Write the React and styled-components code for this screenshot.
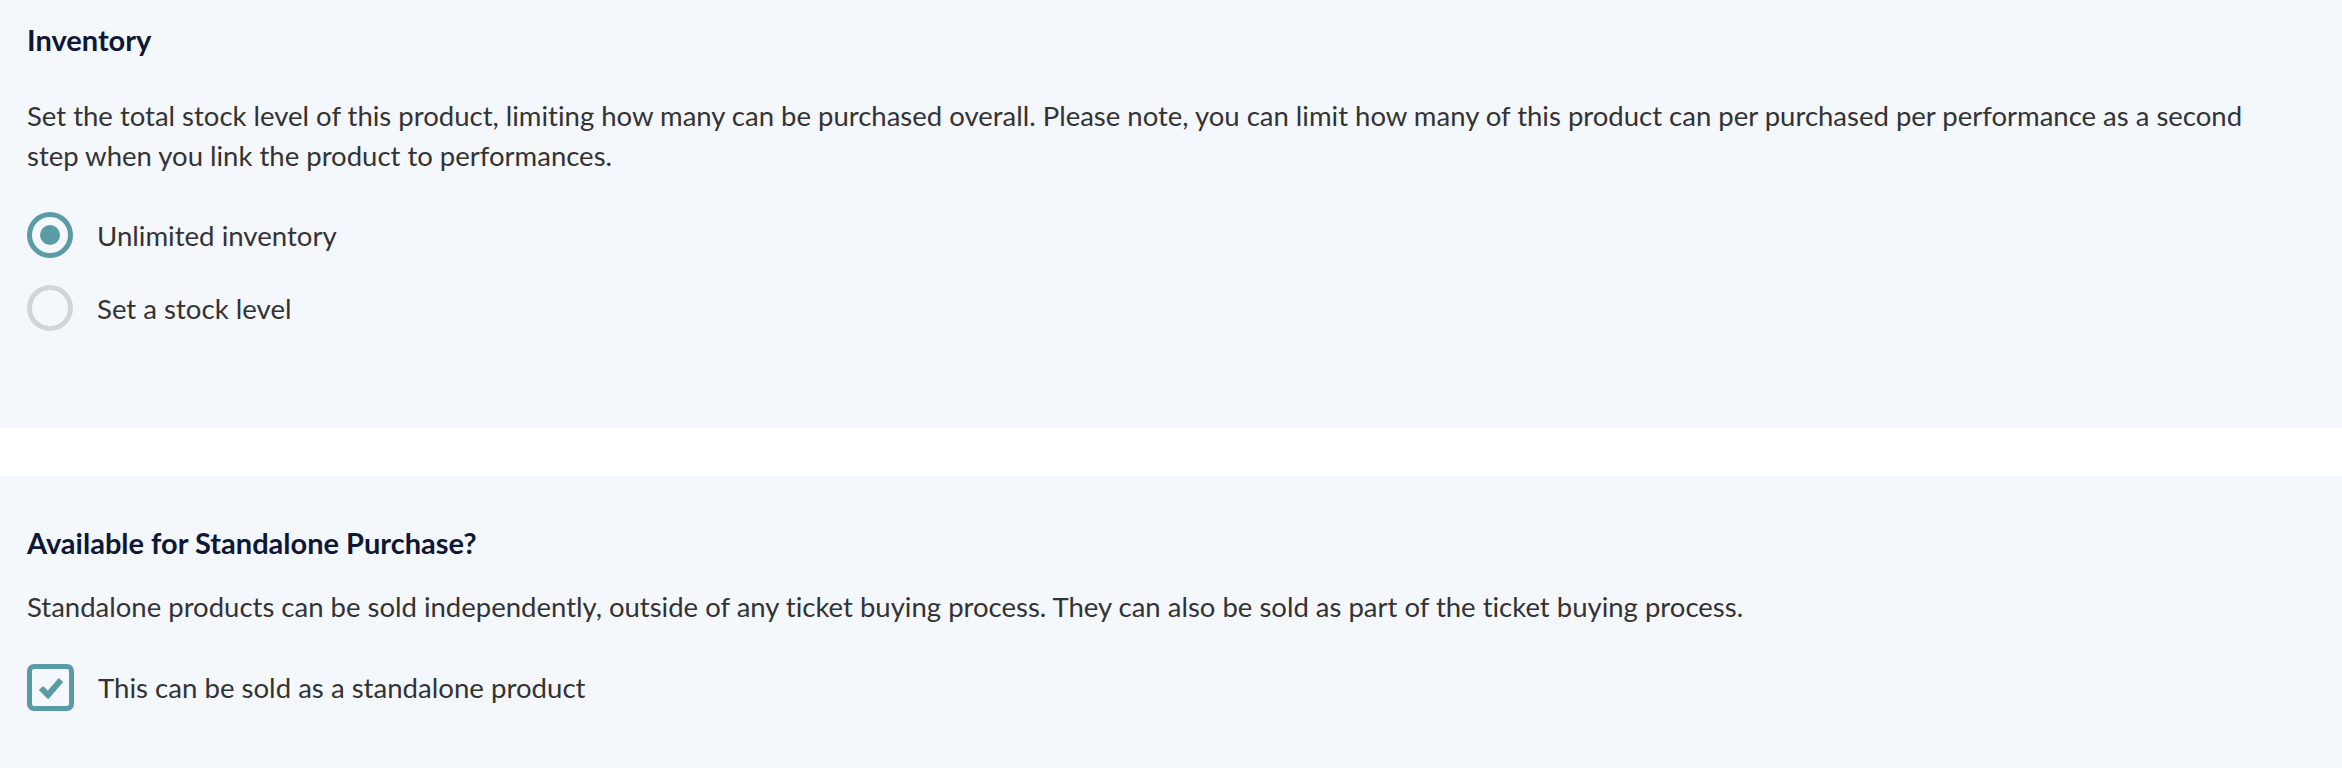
import React from 'react'
import styled, { createGlobalStyle } from 'styled-components'

const GlobalStyle = createGlobalStyle`
  body {
    margin: 0;
    background: #ffffff;
    font-family: Lato, "Noto Sans", sans-serif;
    font-variant-ligatures: none;
  }
`

const Page = styled.div`
  display: flex;
  flex-direction: column;
  gap: 48px;
`

const Panel = styled.section`
  background: #f4f7fc;
  padding: ${p => p.$pad};
  height: ${p => p.$height};
  box-sizing: border-box;
`

const Heading = styled.h3`
  margin: 0;
  font-size: 29px;
  line-height: 34px;
  font-weight: 700;
  color: #0f1737;
`

const Text = styled.p`
  margin: ${p => p.$margin};
  font-size: 27.5px;
  line-height: 40px;
  color: #333333;
`

const Options = styled.div`
  display: flex;
  flex-direction: column;
  gap: 27px;
`

const Option = styled.label`
  display: flex;
  align-items: center;
  gap: 24px;
  font-size: 27.6px;
  color: #333333;
  height: 46px;
`

const Radio = styled.span`
  width: 46px;
  height: 46px;
  box-sizing: border-box;
  border-radius: 50%;
  border: 5px solid ${p => (p.$checked ? '#5a9ca3' : '#d2d5d8')};
  display: flex;
  align-items: center;
  justify-content: center;
  flex-shrink: 0;

  &::after {
    content: '';
    width: 20px;
    height: 20px;
    border-radius: 50%;
    background: #5a9ca3;
    display: ${p => (p.$checked ? 'block' : 'none')};
  }
`

const Checkbox = styled.span`
  width: 47px;
  height: 47px;
  box-sizing: border-box;
  border-radius: 7px;
  border: 5px solid #5a9ca3;
  display: flex;
  align-items: center;
  justify-content: center;
  color: #5a9ca3;
  flex-shrink: 0;
`

const CheckMark = () => (
  <svg width="26" height="23" viewBox="0 0 26 23">
    <polyline
      points="3,12 10,19 23,4"
      fill="none"
      stroke="currentColor"
      strokeWidth="6"
      strokeLinejoin="miter"
    />
  </svg>
)

const App = () => {
  return (
    <>
      <GlobalStyle />
      <Page>
        <Panel $pad="23px 80px 0 27px" $height="428px">
          <Heading>Inventory</Heading>
          <Text $margin="39px 0 36px">
            Set the total stock level of this product, limiting how many can be purchased overall. Please note, you can limit how many of this product can per purchased per performance as a second step when you link the product to performances.
          </Text>
          <Options>
            <Option>
              <Radio $checked />
              Unlimited inventory
            </Option>
            <Option>
              <Radio />
              Set a stock level
            </Option>
          </Options>
        </Panel>
        <Panel $pad="50px 80px 0 27px" $height="292px">
          <Heading>Available for Standalone Purchase?</Heading>
          <Text $margin="27px 0 37px">
            Standalone products can be sold independently, outside of any ticket buying process. They can also be sold as part of the ticket buying process.
          </Text>
          <Option>
            <Checkbox>
              <CheckMark />
            </Checkbox>
            This can be sold as a standalone product
          </Option>
        </Panel>
      </Page>
    </>
  )
}

export default App
